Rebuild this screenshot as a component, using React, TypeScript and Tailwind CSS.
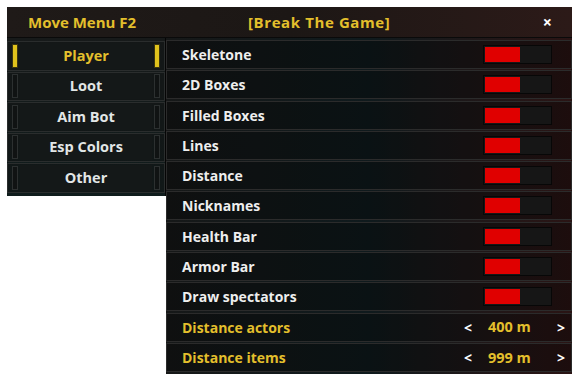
import React from "react";

const toggles = [
  "Skeletone",
  "2D Boxes",
  "Filled Boxes",
  "Lines",
  "Distance",
  "Nicknames",
  "Health Bar",
  "Armor Bar",
  "Draw spectators",
];

const tabs = ["Player", "Loot", "Aim Bot", "Esp Colors", "Other"];

function Toggle() {
  return (
    <div className="w-[69px] h-[19px] border border-[#070707] bg-[#161616] p-[1px] flex">
      <div className="w-[35px] h-full bg-[#e00000]" />
    </div>
  );
}

export default function App() {
  const font = { fontFamily: '"Open Sans", "Noto Sans", sans-serif' };
  return (
    <div className="w-[582px] h-[380px] bg-white pt-[7px] pl-[7px]" style={font}>
      <div className="w-[565px] flex flex-col">
        <div className="h-[31px] flex items-center bg-gradient-to-r from-[#1f1a18] via-[#1c1715] to-[#2c1a18] border-b border-[#0a0a0a] pl-[21px] pr-[20px] text-[15px] font-bold">
          <span className="text-[#e3bf2c] w-[220px]">Move Menu F2</span>
          <span className="text-[#e3bf2c] flex-1 tracking-[0.6px]">[Break The Game]</span>
          <span className="text-white text-[16px]">×</span>
        </div>
        <div className="flex items-start">
          <div className="w-[159px] h-[158px] bg-gradient-to-b from-[#171a1a] to-[#0f1c1c] flex flex-col gap-[1px] pt-[3px] border-r border-[#050505]">
            {tabs.map((t, i) => {
              const active = i === 0;
              return (
                <div
                  key={t}
                  className="h-[29.5px] flex items-center gap-[2px] px-[4px] border border-[#2a2d2d] bg-[#121616]/60"
                >
                  <div
                    className={
                      active
                        ? "w-[6px] h-[24px] bg-[#e0c21c] border border-[#3a3410]"
                        : "w-[6px] h-[24px] bg-[#101313] border border-[#2c3030]"
                    }
                  />
                  <div
                    className={
                      "flex-1 h-[26px] flex items-center justify-center text-[14.5px] font-bold bg-[#141818] " +
                      (active ? "text-[#e3bf2c]" : "text-[#e2e6e6]")
                    }
                  >
                    {t}
                  </div>
                  <div
                    className={
                      active
                        ? "w-[6px] h-[24px] bg-[#e0c21c] border border-[#3a3410]"
                        : "w-[6px] h-[24px] bg-[#101313] border border-[#2c3030]"
                    }
                  />
                </div>
              );
            })}
          </div>
          <div className="w-[406px] bg-gradient-to-r from-[#161818] via-[#0f1a1d] to-[#2a1414] flex flex-col gap-[1.3px] pt-[2px] pb-[2px] h-[336px]">
            {toggles.map((t) => (
              <div
                key={t}
                className="h-[29px] flex items-center justify-between pl-[15px] pr-[19px] border border-[#2b2b2b] bg-black/30"
              >
                <span className="text-[14px] font-bold text-[#eeeeee]">{t}</span>
                <Toggle />
              </div>
            ))}
            {[
              ["Distance actors", "400 m"],
              ["Distance items", "999 m"],
            ].map(([l, v]) => (
              <div
                key={l}
                className="h-[29px] flex items-center pl-[15px] pr-[6px] border border-[#2b2b2b] bg-black/30 text-[14px] font-bold"
              >
                <span className="text-[#e3bf2c] flex-1">{l}</span>
                <span className="text-white w-[23px]">&lt;</span>
                <span className="text-[#e3bf2c] w-[70px] pl-[1px] text-[14.5px]">{v}</span>
                <span className="text-white">&gt;</span>
              </div>
            ))}
          </div>
        </div>
      </div>
    </div>
  );
}
